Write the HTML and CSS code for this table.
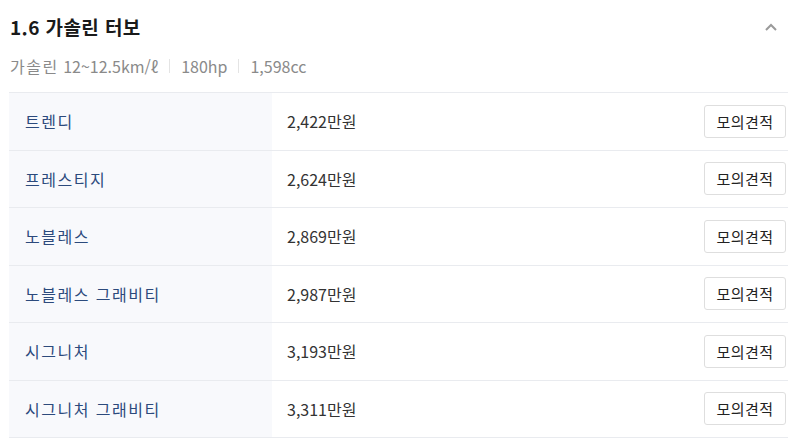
FILE: index.html
```html
<!DOCTYPE html>
<html lang="ko">
<head>
<meta charset="utf-8">
<link rel="stylesheet" href="styles.css">
</head>
<body>
<div class="wrap">
  <div class="head">
    <h2 class="title">1.6 가솔린 터보</h2>
    <svg class="chev" width="12" height="8" viewBox="0 0 12 8"><path d="M1 7 L6 2 L11 7" fill="none" stroke="#9a9a9a" stroke-width="2"/></svg>
  </div>
  <div class="spec">
    <span class="ko">가솔린</span><span>&nbsp;12~12.5km/ℓ</span><span class="sep"></span><span>180hp</span><span class="sep"></span><span>1,598cc</span>
  </div>
  <div class="table">
    <div class="row"><div class="name">트렌디</div><div class="price">2,422만원</div><div class="act"><button class="btn">모의견적</button></div></div>
    <div class="row"><div class="name">프레스티지</div><div class="price">2,624만원</div><div class="act"><button class="btn">모의견적</button></div></div>
    <div class="row"><div class="name">노블레스</div><div class="price">2,869만원</div><div class="act"><button class="btn">모의견적</button></div></div>
    <div class="row"><div class="name">노블레스 그래비티</div><div class="price">2,987만원</div><div class="act"><button class="btn">모의견적</button></div></div>
    <div class="row"><div class="name">시그니처</div><div class="price">3,193만원</div><div class="act"><button class="btn">모의견적</button></div></div>
    <div class="row"><div class="name">시그니처 그래비티</div><div class="price">3,311만원</div><div class="act"><button class="btn">모의견적</button></div></div>
  </div>
</div>
</body>
</html>
```
FILE: styles.css
```css
* { box-sizing: border-box; }
html, body { margin: 0; padding: 0; background: #fff; }
body { font-family: "Noto Sans CJK KR", "Noto Sans", sans-serif; color: #222; }
.wrap { width: 802px; padding: 0 14px 0 9px; }
.head { display: flex; justify-content: space-between; align-items: center; height: 52px; padding-left: 1px; }
.title { margin: 0; font-size: 19px; font-weight: 700; color: #1a1a1a; letter-spacing: 0.4px; }
.chev { margin-right: 11px; margin-top: 2px; }
.spec { display: flex; align-items: center; height: 28px; padding-left: 1px; font-size: 16px; color: #8a8a8a; margin-bottom: 12px; letter-spacing: 0; }
.spec .ko { letter-spacing: 1.5px; }
.sep { width: 1px; height: 14px; background: #e4e4e4; margin: 0 11px; }
.table { border-top: 1px solid #e9ebef; }
.row { display: flex; align-items: center; height: 57.5px; border-bottom: 1px solid #e9ebef; }
.name { width: 263px; height: 100%; background: #f8f9fc; display: flex; align-items: center; padding-left: 16px; font-size: 16px; color: #2c4a7c; letter-spacing: 1.5px; }
.price { flex: 1; padding-left: 15px; font-size: 16px; color: #333; letter-spacing: 0; }
.act { padding-right: 2px; }
.btn { width: 82px; height: 33px; border: 1px solid #dedede; border-radius: 3px; background: #fff; font-family: inherit; font-size: 15px; color: #222; padding: 0; letter-spacing: 0.5px; }
```
